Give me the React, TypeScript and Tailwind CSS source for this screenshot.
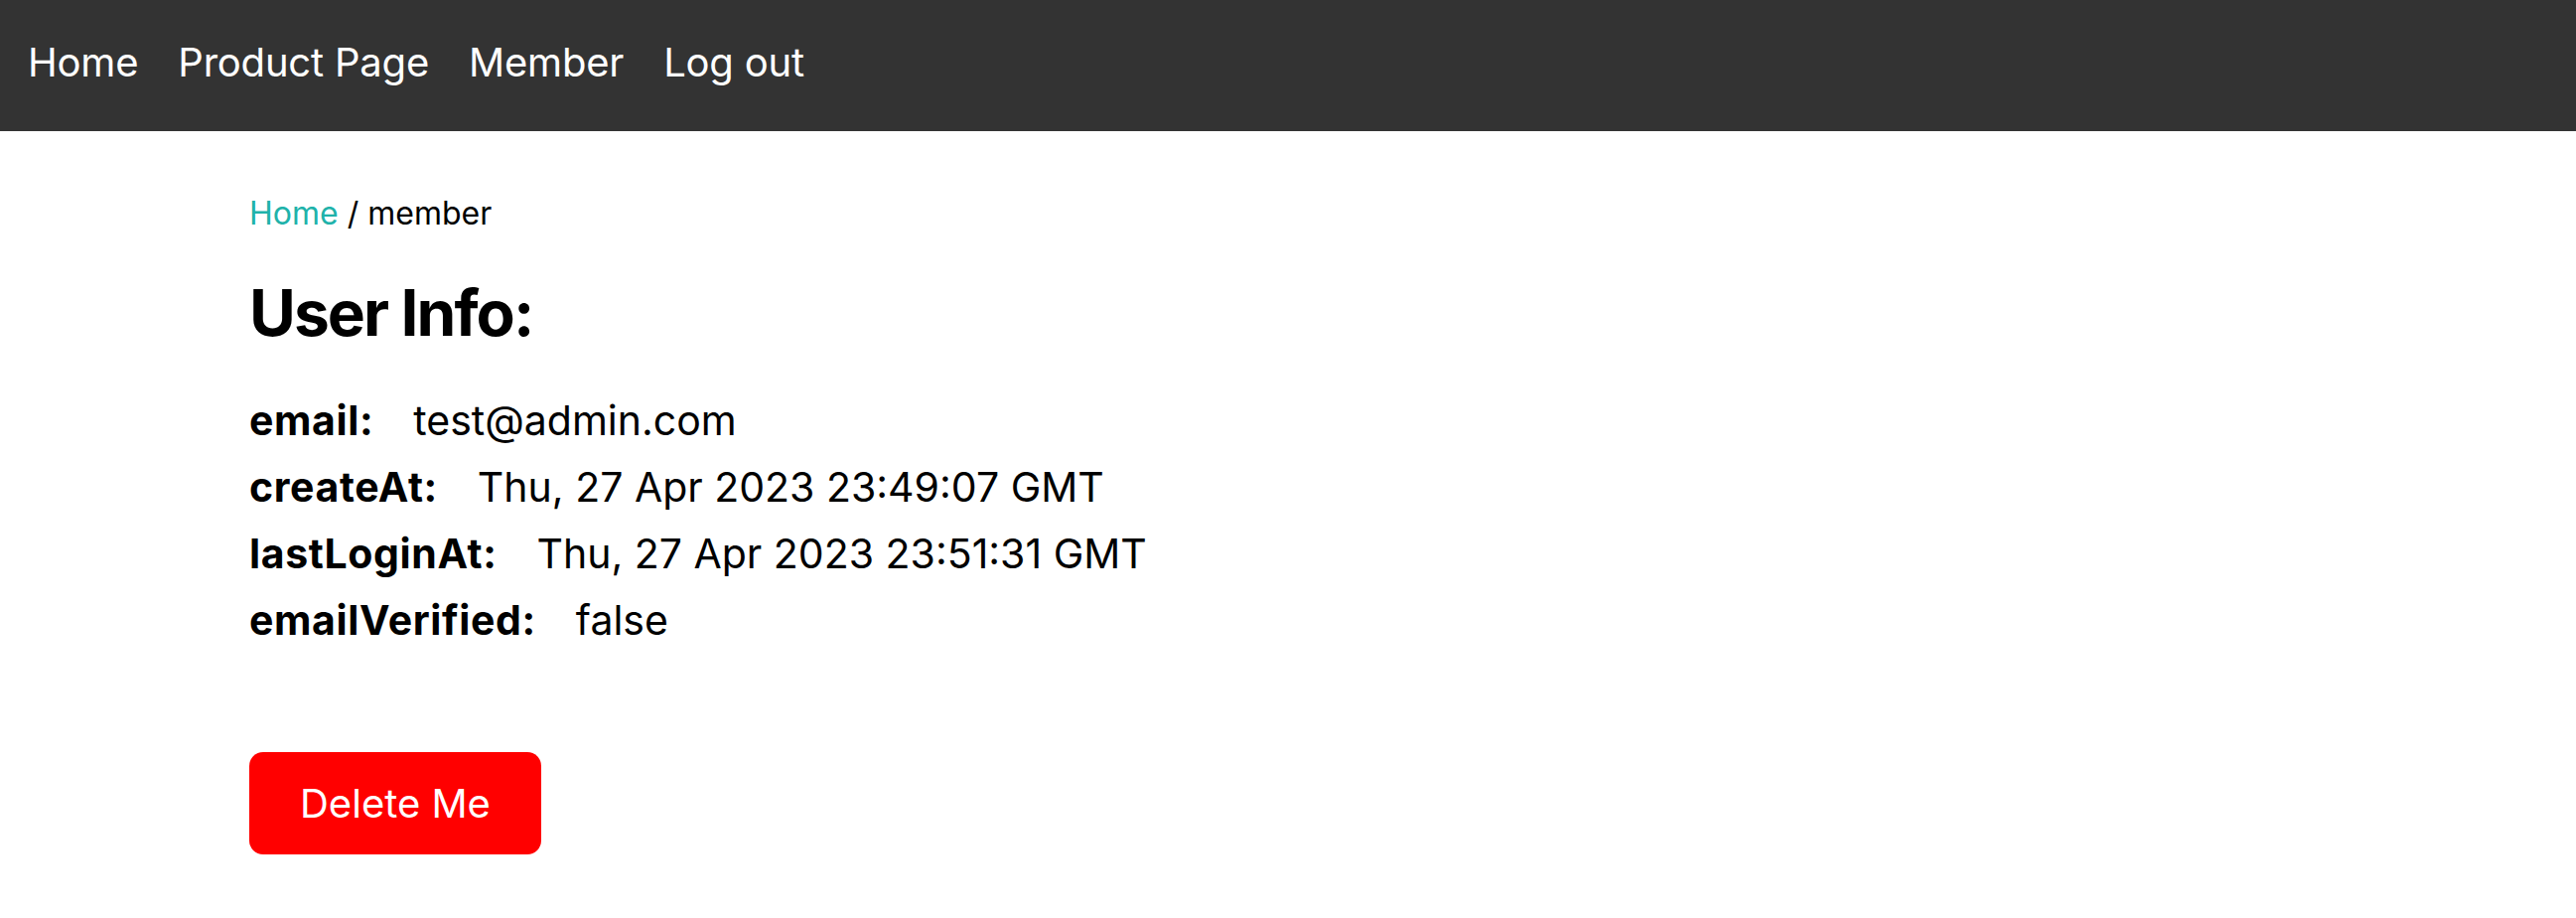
import React from 'react';

const rows: [string, string][] = [
  ['email:', 'test@admin.com'],
  ['createAt:', 'Thu, 27 Apr 2023 23:49:07 GMT'],
  ['lastLoginAt:', 'Thu, 27 Apr 2023 23:51:31 GMT'],
  ['emailVerified:', 'false'],
];

export default function App() {
  return (
    <div className="min-h-screen bg-white text-black font-['Inter',sans-serif]">
      {/* Top nav */}
      <nav className="h-[132px] bg-[#333333] flex items-start gap-[40px] pl-[28px] pt-[33px] text-[40px] text-white tracking-[-0.005em]">
        <a href="#">Home</a>
        <a href="#">Product Page</a>
        <a href="#">Member</a>
        <a href="#">Log out</a>
      </nav>

      <main className="pl-[251px] pt-[63px]">
        {/* Breadcrumb */}
        <div className="text-[32px] leading-[40px]">
          <a href="#" className="text-[#20b2aa]">Home</a> / member
        </div>

        <h1 className="mt-[40px] text-[64px] leading-[80px] font-bold tracking-[-0.03em]">User Info:</h1>

        <div className="mt-[35px] text-[41px] leading-[67px]">
          {rows.map(([label, value]) => (
            <div key={label} className="flex items-baseline gap-[40px]">
              <span className="font-bold tracking-[0.015em]">{label}</span>
              <span>{value}</span>
            </div>
          ))}
        </div>

        <button className="mt-[99px] h-[103px] px-[51px] rounded-[14px] bg-[#ff0000] text-white text-[40px] flex items-center">
          Delete Me
        </button>
      </main>
    </div>
  );
}
